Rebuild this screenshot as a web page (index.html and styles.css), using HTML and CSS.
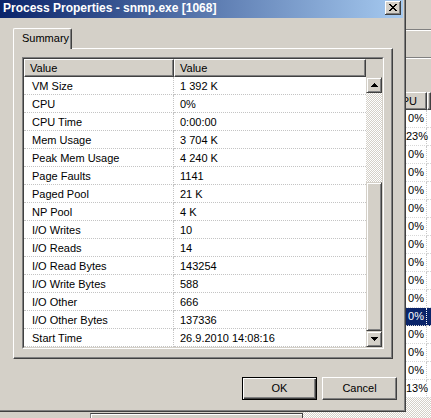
FILE: index.html
```html
<!DOCTYPE html>
<html>
<head>
<meta charset="utf-8">
<title>Process Properties</title>
<link rel="stylesheet" href="styles.css">
</head>
<body>
<div class="app">
  <div class="tb tb1"></div>
  <div class="tb tb2"></div>
  <div class="tb tb3"></div>
  <div class="plist">
    <div class="prow phead"><div class="pc pmain"></div><div class="pc pcpu">CPU</div><div class="pc pnext"></div></div>
    <div class="prow"><div class="pc pmain"></div><div class="pc pcpu">0%</div><div class="pc pnext"></div></div>
    <div class="prow"><div class="pc pmain"></div><div class="pc pcpu">23%</div><div class="pc pnext"></div></div>
    <div class="prow"><div class="pc pmain"></div><div class="pc pcpu">0%</div><div class="pc pnext"></div></div>
    <div class="prow"><div class="pc pmain"></div><div class="pc pcpu">0%</div><div class="pc pnext"></div></div>
    <div class="prow"><div class="pc pmain"></div><div class="pc pcpu">0%</div><div class="pc pnext"></div></div>
    <div class="prow"><div class="pc pmain"></div><div class="pc pcpu">0%</div><div class="pc pnext"></div></div>
    <div class="prow"><div class="pc pmain"></div><div class="pc pcpu">0%</div><div class="pc pnext"></div></div>
    <div class="prow"><div class="pc pmain"></div><div class="pc pcpu">0%</div><div class="pc pnext"></div></div>
    <div class="prow"><div class="pc pmain"></div><div class="pc pcpu">0%</div><div class="pc pnext"></div></div>
    <div class="prow"><div class="pc pmain"></div><div class="pc pcpu">0%</div><div class="pc pnext"></div></div>
    <div class="prow"><div class="pc pmain"></div><div class="pc pcpu">0%</div><div class="pc pnext"></div></div>
    <div class="prow sel"><div class="pc pmain"></div><div class="pc pcpu">0%</div><div class="pc pnext"></div></div>
    <div class="prow"><div class="pc pmain"></div><div class="pc pcpu">0%</div><div class="pc pnext"></div></div>
    <div class="prow"><div class="pc pmain"></div><div class="pc pcpu">0%</div><div class="pc pnext"></div></div>
    <div class="prow"><div class="pc pmain"></div><div class="pc pcpu">0%</div><div class="pc pnext"></div></div>
    <div class="prow"><div class="pc pmain"></div><div class="pc pcpu">13%</div><div class="pc pnext"></div></div>
  </div>
  <div class="pfoot">
    <div class="pleft"><div class="pstatus"></div></div>
    <div class="pdither"></div>
  </div>
</div>

<div class="dialog">
  <div class="titlebar">
    <span class="title">Process Properties - snmp.exe [1068]</span>
    <div class="closebtn">
      <svg class="xglyph" width="8" height="7" viewBox="0 0 8 7" shape-rendering="crispEdges">
        <rect x="0" y="0" width="2" height="1"/><rect x="6" y="0" width="2" height="1"/>
        <rect x="1" y="1" width="2" height="1"/><rect x="5" y="1" width="2" height="1"/>
        <rect x="2" y="2" width="4" height="1"/>
        <rect x="3" y="3" width="2" height="1"/>
        <rect x="2" y="4" width="4" height="1"/>
        <rect x="1" y="5" width="2" height="1"/><rect x="5" y="5" width="2" height="1"/>
        <rect x="0" y="6" width="2" height="1"/><rect x="6" y="6" width="2" height="1"/>
      </svg>
    </div>
  </div>

  <div class="tabs">
    <div class="tab">Summary</div>
  </div>

  <div class="panel">
    <div class="list">
      <div class="list-in">
        <div class="hdr">
          <div class="hcell h1">Value</div>
          <div class="hcell h2">Value</div>
          <div class="hfill"></div>
        </div>
        <div class="lbody">
          <div class="rows">
            <div class="row"><div class="c1">VM Size</div><div class="c2">1 392 K</div></div>
            <div class="row"><div class="c1">CPU</div><div class="c2">0%</div></div>
            <div class="row"><div class="c1">CPU Time</div><div class="c2">0:00:00</div></div>
            <div class="row"><div class="c1">Mem Usage</div><div class="c2">3 704 K</div></div>
            <div class="row"><div class="c1">Peak Mem Usage</div><div class="c2">4 240 K</div></div>
            <div class="row"><div class="c1">Page Faults</div><div class="c2">1141</div></div>
            <div class="row"><div class="c1">Paged Pool</div><div class="c2">21 K</div></div>
            <div class="row"><div class="c1">NP Pool</div><div class="c2">4 K</div></div>
            <div class="row"><div class="c1">I/O Writes</div><div class="c2">10</div></div>
            <div class="row"><div class="c1">I/O Reads</div><div class="c2">14</div></div>
            <div class="row"><div class="c1">I/O Read Bytes</div><div class="c2">143254</div></div>
            <div class="row"><div class="c1">I/O Write Bytes</div><div class="c2">588</div></div>
            <div class="row"><div class="c1">I/O Other</div><div class="c2">666</div></div>
            <div class="row"><div class="c1">I/O Other Bytes</div><div class="c2">137336</div></div>
            <div class="row"><div class="c1">Start Time</div><div class="c2">26.9.2010 14:08:16</div></div>
          </div>
          <div class="sb">
            <div class="sbtn">
              <svg width="7" height="4" viewBox="0 0 7 4" shape-rendering="crispEdges"><path d="M3 0h1v1h1v1h1v1h1v1H0V3h1V2h1V1h1z"/></svg>
            </div>
            <div class="track"></div>
            <div class="thumb"></div>
            <div class="sbtn">
              <svg width="7" height="4" viewBox="0 0 7 4" shape-rendering="crispEdges"><path d="M0 0h7v1h-1v1h-1v1h-1v1h-1V3H2V2H1V1H0z"/></svg>
            </div>
          </div>
        </div>
      </div>
    </div>
  </div>

  <div class="buttons">
    <div class="btn default">OK</div>
    <div class="btn">Cancel</div>
  </div>
</div>
</body>
</html>
```

FILE: styles.css
```css
html, body {
  margin: 0;
  padding: 0;
}
body {
  width: 431px;
  height: 418px;
  overflow: hidden;
  position: relative;
  background: #d4d0c8;
  font: 11px "Liberation Sans", Arial, sans-serif;
  color: #000;
}

/* ---------- background application ---------- */
.app {
  width: 431px;
  height: 418px;
  display: flex;
  flex-direction: column;
  background: #d4d0c8;
}
.tb {
  box-sizing: border-box;
  flex: none;
}
.tb1 {
  height: 30px;
  border-bottom: 1px solid #808080;
}
.tb2 {
  height: 28px;
  border-top: 1px solid #fff;
  border-bottom: 1px solid #808080;
}
.tb3 {
  height: 34px;
  border-top: 1px solid #fff;
}
.plist {
  flex: none;
  display: flex;
  flex-direction: column;
}
.prow {
  display: flex;
  height: 18px;
  background: #fff;
}
.pc {
  box-sizing: border-box;
  height: 18px;
  line-height: 17px;
  border-bottom: 1px dotted #d8d8d8;
  flex: none;
  white-space: nowrap;
}
.pmain { width: 406px; }
.pcpu {
  width: 21px;
  text-align: right;
  padding-right: 2px;
  border-right: 1px dotted #c8c8c8;
}
.pnext { flex: 1; }
.phead { background: #d4d0c8; }
.phead .pc {
  border-top: 1px solid #fff;
  border-left: 1px solid #fff;
  border-right: 1px solid #404040;
  border-bottom: 1px solid #404040;
  box-shadow: inset -1px -1px #808080;
  line-height: 16px;
}
.phead .pmain { width: 386px; }
.phead .pcpu {
  width: 41px;
  padding-right: 9px;
}
.sel { background: #0a246a; color: #fff; }
.sel .pcpu { border-right-color: #fff; }
.pfoot {
  flex: 1;
  display: flex;
}
.pleft {
  width: 303px;
  padding: 15px 0 0 90px;
  box-sizing: border-box;
}
.pstatus {
  height: 10px;
  border-top: 1px solid #404040;
  border-left: 1px solid #808080;
  border-right: 1px solid #404040;
  box-shadow: inset 1px 1px #fff;
}
.pdither {
  flex: 1;
  background: repeating-conic-gradient(#fff 0 25%, #d4d0c8 0 50%) 0 0 / 2px 2px;
}

/* ---------- dialog ---------- */
.dialog {
  position: absolute;
  left: 0;
  top: 0;
  width: 406px;
  height: 412px;
  box-sizing: border-box;
  background: #d4d0c8;
  border-right: 1px solid #404040;
  border-bottom: 1px solid #404040;
  box-shadow: inset -1px -1px #808080;
  padding: 0 2px 2px 0;
  display: flex;
  flex-direction: column;
}
.titlebar {
  height: 18px;
  flex: none;
  display: flex;
  align-items: flex-start;
  background: linear-gradient(to right, #0a246a, #a6caf0);
}
.title {
  flex: 1;
  padding-left: 3px;
  color: #fff;
  font: bold 12px "Liberation Sans", Arial, sans-serif;
  line-height: 17px;
  white-space: nowrap;
}
.closebtn {
  flex: none;
  width: 16px;
  height: 14px;
  margin: 1px 2px 0 0;
  box-sizing: border-box;
  background: #d4d0c8;
  border-right: 1px solid #404040;
  border-bottom: 1px solid #404040;
  box-shadow: inset 1px 1px #fff, inset -1px -1px #808080;
  display: flex;
  justify-content: center;
  align-items: center;
}
.xglyph {
  display: block;
  flex: none;
  width: 8px;
  height: 7px;
  fill: #000;
}

.tabs {
  flex: none;
  display: flex;
  height: 20px;
  margin-top: 10px;
  padding-left: 13px;
  position: relative;
  z-index: 1;
}
.tab {
  width: 59px;
  height: 21px;
  box-sizing: border-box;
  background: #d4d0c8;
  border-top: 1px solid #fff;
  border-left: 1px solid #fff;
  border-right: 1px solid #404040;
  border-radius: 2px 2px 0 0;
  box-shadow: inset -1px 0 #808080;
  padding-left: 8px;
  line-height: 19px;
  white-space: nowrap;
}

.panel {
  flex: none;
  margin-left: 13px;
  width: 380px;
  height: 311px;
  box-sizing: border-box;
  border-top: 1px solid #fff;
  border-left: 1px solid #fff;
  border-right: 1px solid #404040;
  border-bottom: 1px solid #404040;
  box-shadow: inset -1px -1px #808080;
  padding: 8px 0 0 8px;
}
.list {
  width: 362px;
  height: 292px;
  box-sizing: border-box;
  border-top: 1px solid #808080;
  border-left: 1px solid #808080;
  border-right: 1px solid #fff;
  border-bottom: 1px solid #fff;
}
.list-in {
  height: 100%;
  box-sizing: border-box;
  border-top: 1px solid #404040;
  border-left: 1px solid #404040;
  border-right: 1px solid #d4d0c8;
  border-bottom: 1px solid #d4d0c8;
  background: #fff;
  display: flex;
  flex-direction: column;
}
.hdr {
  display: flex;
  height: 18px;
  flex: none;
  background: #d4d0c8;
}
.hcell {
  box-sizing: border-box;
  height: 18px;
  border-top: 1px solid #fff;
  border-left: 1px solid #fff;
  border-right: 1px solid #404040;
  border-bottom: 1px solid #404040;
  box-shadow: inset -1px -1px #808080;
  padding-left: 5px;
  line-height: 16px;
}
.h1 { width: 150px; }
.h2 { width: 192px; }
.hfill { flex: 1; }

.lbody {
  flex: 1;
  display: flex;
}
.rows {
  width: 342px;
  display: flex;
  flex-direction: column;
}
.row {
  display: flex;
  height: 18px;
}
.c1, .c2 {
  box-sizing: border-box;
  height: 18px;
  line-height: 18px;
  border-bottom: 1px dotted #c4c4c4;
  white-space: nowrap;
}
.c1 {
  width: 150px;
  padding-left: 8px;
  border-right: 1px dotted #c4c4c4;
}
.c2 {
  width: 192px;
  padding-left: 6px;
}

.sb {
  width: 16px;
  display: flex;
  flex-direction: column;
}
.sbtn, .thumb {
  box-sizing: border-box;
  background: #d4d0c8;
  border-top: 1px solid #d4d0c8;
  border-left: 1px solid #d4d0c8;
  border-right: 1px solid #404040;
  border-bottom: 1px solid #404040;
  box-shadow: inset 1px 1px #fff, inset -1px -1px #808080;
}
.sbtn {
  height: 16px;
  display: flex;
  justify-content: center;
  align-items: center;
}
.sbtn svg { display: block; fill: #000; }
.track {
  height: 89px;
  background: repeating-conic-gradient(#fff 0 25%, #d4d0c8 0 50%) 0 0 / 2px 2px;
}
.thumb { height: 149px; }

.buttons {
  flex: none;
  display: flex;
  justify-content: flex-end;
  gap: 5px;
  margin-top: 18px;
  padding-right: 6px;
}
.btn {
  width: 75px;
  height: 23px;
  box-sizing: border-box;
  background: #d4d0c8;
  border-top: 1px solid #fff;
  border-left: 1px solid #fff;
  border-right: 1px solid #404040;
  border-bottom: 1px solid #404040;
  box-shadow: inset -1px -1px #808080;
  text-align: center;
  line-height: 20px;
}
.btn.default {
  border: 1px solid #000;
  box-shadow: inset 1px 1px #fff, inset -1px -1px #404040, inset -2px -2px #808080;
}
```
